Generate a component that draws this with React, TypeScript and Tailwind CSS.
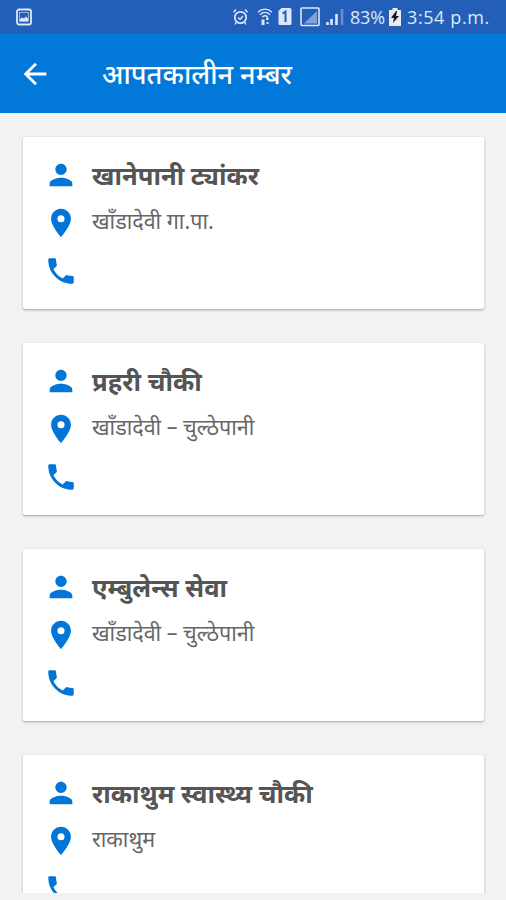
import React from "react";

const entries = [
  { name: "खानेपानी ट्यांकर", place: "खाँडादेवी गा.पा." },
  { name: "प्रहरी चौकी", place: "खाँडादेवी – चुल्ठेपानी" },
  { name: "एम्बुलेन्स सेवा", place: "खाँडादेवी – चुल्ठेपानी" },
  { name: "राकाथुम स्वास्थ्य चौकी", place: "राकाथुम" },
];

const PERSON = "M12 12c2.21 0 4-1.79 4-4s-1.79-4-4-4-4 1.79-4 4 1.79 4 4 4zm0 2c-2.67 0-8 1.34-8 4v2h16v-2c0-2.66-5.33-4-8-4z";
const PIN = "M12 2C8.13 2 5 5.13 5 9c0 5.25 7 13 7 13s7-7.75 7-13c0-3.87-3.13-7-7-7zm0 9.5a2.5 2.5 0 0 1 0-5 2.5 2.5 0 0 1 0 5z";
const PHONE = "M6.62 10.79c1.44 2.83 3.76 5.14 6.59 6.59l2.2-2.2c.27-.27.67-.36 1.02-.24 1.12.37 2.33.57 3.57.57.55 0 1 .45 1 1V20c0 .55-.45 1-1 1-9.39 0-17-7.61-17-17 0-.55.45-1 1-1h3.5c.55 0 1 .45 1 1 0 1.25.2 2.45.57 3.57.11.35.03.74-.25 1.02l-2.2 2.2z";

function Glyph({ d }: { d: string }) {
  return (
    <svg viewBox="0 0 24 24" className="block size-[34px] shrink-0 fill-[#0275d8]">
      <path d={d} />
    </svg>
  );
}

function Card({ name, place }: { name: string; place: string }) {
  return (
    <article className="h-[172px] shrink-0 rounded-[2px] bg-white pt-[21px] pl-[21px] shadow-[0_1px_3px_rgba(0,0,0,0.24),0_1px_1px_rgba(0,0,0,0.12)]">
      <div className="flex h-[48px] items-start">
        <Glyph d={PERSON} />
        <h2 className="ml-[14px] whitespace-nowrap pt-[3px] text-[25.6px] leading-[36px] font-bold text-[#555555]">{name}</h2>
      </div>
      <div className="flex h-[48px] items-start">
        <Glyph d={PIN} />
        <p className="ml-[14px] whitespace-nowrap pt-[2px] text-[21.5px] leading-[32px] text-[#666666]">{place}</p>
      </div>
      <Glyph d={PHONE} />
    </article>
  );
}

function StatusBar() {
  return (
    <div className="flex h-[34px] shrink-0 items-center justify-between bg-[#235fb8] text-[#dce8fa]">
      <svg width="16" height="18" viewBox="0 0 16 18" className="ml-[16px]" fill="none" stroke="currentColor">
        <rect x="1" y="1.5" width="14" height="15" rx="2" strokeWidth="1.8" />
        <rect x="3.5" y="4.5" width="9" height="9" strokeWidth=".6" />
        <path d="M4 13v-2l2-1.500 2 1 2-2 2 2V13z" fill="currentColor" stroke="none" />
      </svg>
      <div className="mr-[16px] flex items-center">
        <svg width="112" height="20" viewBox="0 0 112 20" className="mr-[6px]" fill="none" stroke="currentColor">
          <circle cx="8.5" cy="10.5" r="5.7" strokeWidth="1.7" />
          <path d="M1.5 5.2 4 2.5M15.5 5.2 13 2.5M4.5 15 3 17.5M12.5 15l1.5 2.5M6 10.5l2 2 3-3.5" strokeWidth="1.4" />
          <path d="M26 5.200c4-4 10-4 14 0M28 7.700c3-3 7-3 10 0M30.400 10c1.500-1.400 3.700-1.400 5.200 0" strokeWidth="1.3" />
          <path d="M29.500 12.500h3V18h-3zM34 10.500h2.500V13H34zM34.500 15h2v2h-2z" fill="currentColor" stroke="none" />
          <path d="M49.5 1H58q1.5 0 1.5 1.5v14Q59.500 18 58 18H48q-1.500 0-1.500-1.500V4z" fill="currentColor" stroke="none" />
          <path d="M50.500 6.500 53.500 4.500V15" stroke="#235fb8" strokeWidth="2" />
          <rect x="69" y="1" width="18" height="17.500" rx="1" strokeWidth="1.600" />
          <path d="M85 4v12.500H72z" fill="currentColor" stroke="none" opacity=".5" />
          <path d="M95.500 15v3M99.500 12v6M104.500 7v11" strokeWidth="2.600" />
          <path d="M110 2v16" strokeWidth="2.600" opacity=".35" />
        </svg>
        <span className="w-[37px] whitespace-nowrap font-['Open_Sans',sans-serif] text-[18px] leading-[20px] tracking-[-0.2px]">83%</span>
        <svg width="12" height="18" viewBox="0 0 12 18" className="mx-[2px]">
          <path d="M3.500 0h5v2H12v16H0V2h3.500z" fill="#e9edf2" />
          <path d="M7 3 2 10h3l-1 5 6-7H7l1-5z" fill="#111827" />
        </svg>
        <span className="ml-[4px] w-[83px] whitespace-nowrap font-['Open_Sans',sans-serif] text-[18px] leading-[20px] tracking-[0.6px]">3:54 p.m.</span>
      </div>
    </div>
  );
}

export default function App() {
  return (
    <div className="flex h-[900px] w-[506px] flex-col overflow-hidden bg-[#f2f2f2] font-['Noto_Sans_Devanagari','Noto_Sans',sans-serif]">
      <StatusBar />
      <header className="flex h-[79px] shrink-0 items-center bg-[#0278d9] pl-[18px] text-white">
        <svg viewBox="0 0 24 24" className="size-[34px] fill-white">
          <path d="M20 11H7.830l5.590-5.590L12 4l-8 8 8 8 1.410-1.410L7.830 13H20z" />
        </svg>
        <h1 className="ml-[50px] whitespace-nowrap pt-[8px] text-[27.2px] leading-[36px] font-medium">आपतकालीन नम्बर</h1>
      </header>
      <main className="flex h-[780px] shrink-0 flex-col gap-[34px] overflow-hidden pt-[24px] pr-[22px] pl-[23px]">
        {entries.map((e) => (
          <Card key={e.name} name={e.name} place={e.place} />
        ))}
      </main>
    </div>
  );
}
